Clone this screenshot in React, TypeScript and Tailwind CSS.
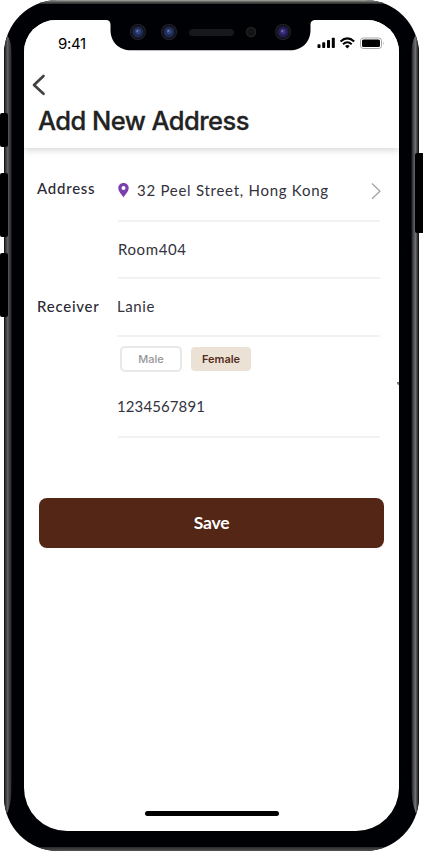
import React from "react";

const AVENIR = "font-['Lato','Liberation_Sans',sans-serif]";
const SF = "font-['Inter','Liberation_Sans',sans-serif]";

function Lens({ x, tint, glow }: { x: number; tint: string; glow: string }) {
  return (
    <g>
      <circle cx={x} cy="32" r="8" fill="#26262a" />
      <circle cx={x} cy="32" r="7.200" fill="#10111c" />
      <circle cx={x} cy="32" r="5.500" fill={tint} />
      <circle cx={x} cy="31.600" r="2.800" fill={glow} />
      <circle cx={x - 0.7} cy="31" r="0.9" fill="#7480a8" />
    </g>
  );
}

function Notch() {
  return (
    <svg className="absolute left-0 top-0 h-[60px] w-[423px]" viewBox="0 0 423 60">
      <path d="M106 19V20C109 20 110.500 21.500 110.500 25V30C110.500 42 119 50.300 131 50.300H290C302 50.300 310.500 42 310.500 30V25C310.500 21.500 312 20 316 20V19Z" fill="#000105" />
      <Lens x={138} tint="#1d2a50" glow="#31447a" />
      <Lens x={169} tint="#1d2a50" glow="#31447a" />
      <rect x="189" y="29" width="45" height="7" rx="3.500" fill="#18181a" />
      <circle cx="251" cy="32" r="5.200" fill="#262628" />
      <circle cx="251" cy="32" r="4.200" fill="#141415" />
      <Lens x={283} tint="#241c50" glow="#3e3182" />
    </svg>
  );
}

function StatusIcons() {
  return (
    <svg className="h-[14px] w-[68px]" viewBox="317 36 68 14">
      <rect x="317.500" y="44.300" width="3" height="3.700" rx=".8" />
      <rect x="322.200" y="42.300" width="3" height="5.700" rx=".8" />
      <rect x="327" y="40" width="3" height="8" rx=".8" />
      <rect x="331.800" y="37.700" width="3" height="10.300" rx=".8" />
      <g fill="none" stroke="#000" strokeWidth="2">
        <path d="M340.500 41.500Q347.300 35.300 354.200 41.500" />
        <path d="M343 44.200Q347.300 40.300 351.700 44.200" />
      </g>
      <path d="M345 46Q347.300 44.200 349.700 46L347.300 48.400Z" />
      <rect x="360.500" y="38" width="21" height="10.500" rx="2.800" fill="none" stroke="#a6a6a6" />
      <rect x="362" y="39.500" width="18" height="7.500" rx="1.600" />
      <path d="M383 41.500Q384.500 43.200 383 45Z" fill="#a6a6a6" />
    </svg>
  );
}

function Header() {
  return (
    <header className={`h-[128px] shrink-0 bg-white shadow-[0_2px_7px_rgba(0,0,0,0.17)] ${SF}`}>
      <div className="flex h-[46px] justify-between pl-[34px] pr-[14px]">
        <span className="mt-[15px] text-[15px] leading-[18px] tracking-[-0.3px] text-black">9:41</span>
        <span className="mt-4"><StatusIcons /></span>
      </div>
      <svg className="ml-[7px] mt-[7px] block h-6 w-4" viewBox="0 0 16 24" fill="none" stroke="#444240" strokeWidth="2.700" strokeLinecap="round" strokeLinejoin="round">
        <path d="M12.500 3L3 12L12.500 20.800" />
      </svg>
      <h1 className="ml-[14px] mt-[8px] whitespace-nowrap text-[25.5px] font-medium leading-8 tracking-[-0.56px] text-[#222] [-webkit-text-stroke:0.3px_#222]">Add New Address</h1>
    </header>
  );
}

function Label({ children }: { children: React.ReactNode }) {
  return <span className="block w-[80px] shrink-0 text-[15px] font-medium leading-5 tracking-[0.75px] text-[#2b2a35]">{children}</span>;
}

export default function App() {
  return (
    <div className={`relative h-[852px] w-[423px] overflow-hidden bg-white ${AVENIR}`}>
      <div className="absolute left-0 top-[113px] z-10 h-[34px] w-2 rounded-[2px] bg-black" />
      <div className="absolute left-0 top-[173px] z-10 h-16 w-2 rounded-[2px] bg-black" />
      <div className="absolute left-0 top-[253px] z-10 h-16 w-2 rounded-[2px] bg-black" />
      <div className="absolute left-[415px] top-[153px] z-10 h-20 w-[9px] rounded-[2px] bg-black" />
      <div className="relative ml-1 h-[851px] w-[415px] overflow-hidden rounded-[54px] bg-[#000105] px-5 pt-5">
        <div className="absolute inset-x-[36px] top-0 h-1 bg-linear-to-b from-[#a6aca6] via-[#535753] to-[#292b2b]" />
        <div className="absolute inset-x-[36px] bottom-0 h-1 bg-linear-to-t from-[#545254] to-[#292829]" />
        <div className="absolute left-0 top-[34px] h-[782px] w-2 rounded-br-[8px_36px] rounded-tr-[8px_20px] bg-[linear-gradient(90deg,#080808_0%,#333234_18%,#666466_48%,#444244_62%,#353436_82%,#000105_100%)]" />
        <div className="absolute right-0 top-[34px] h-[782px] w-2 rounded-bl-[8px_36px] rounded-tl-[8px_20px] bg-[linear-gradient(270deg,#080808_0%,#333234_18%,#737273_45%,#555355_62%,#353436_82%,#000105_100%)]" />
        <main className="relative flex h-[811px] w-[375px] flex-col overflow-hidden rounded-t-[32px] rounded-b-[43px] bg-white">
          <Header />
          <div className="flex h-[72px] shrink-0 pl-[13px] pr-[19px]">
            <div className="pt-[30px]"><Label>Address</Label></div>
            <div className="ml-auto flex h-[74px] w-[262px] items-start border-b-2 border-[#f2f2f2]">
              <svg className="mt-[34.5px] h-[15px] w-[11px]" viewBox="0 0 11 15">
                <path fillRule="evenodd" fill="#7d3fae" d="M5.500 0C2.400 0 .3 2.200.3 5C.3 8.500 3.800 11.500 5.500 14.500C7.200 11.500 10.700 8.500 10.700 5C10.700 2.200 8.600 0 5.500 0ZM5.500 3.100A2 2 0 1 1 5.500 7.100A2 2 0 1 1 5.500 3.100Z" />
              </svg>
              <span className="ml-2 mt-[32px] whitespace-nowrap text-[15px] leading-5 tracking-[0.73px] text-[#33323d]">32 Peel Street, Hong Kong</span>
              <svg className="-mr-px ml-auto mt-[34px] h-[18px] w-[10px]" viewBox="0 0 10 18" fill="none" stroke="#a1a1a1" strokeWidth="1.200">
                <path d="M1 1.500L9 9.200L1 16.800" />
              </svg>
            </div>
          </div>
          <div className="ml-[94px] mr-[19px] mt-[2px] h-[57px] shrink-0 border-b-2 border-[#f2f2f2] pt-[17px] text-[15px] leading-5 tracking-[0.6px] text-[#33323d]">Room404</div>
          <div className="ml-[13px] mr-[19px] flex h-[58px] shrink-0">
            <div className="pt-[17px]"><Label>Receiver</Label></div>
            <div className="ml-auto w-[263px] border-b-2 border-[#f2f2f2] pt-[17px] text-[15px] leading-5 tracking-[0.6px] text-[#33323d]">Lanie</div>
          </div>
          <div className="ml-[94px] mr-[19px] h-[101px] shrink-0 border-b-2 border-[#f2f2f2]">
            <div className={`ml-[2px] flex items-center gap-[9px] pt-[9px] text-[11px] ${SF}`}>
              <button className="h-[26px] w-[62px] rounded-[5px] border-2 border-[#e8e8e8] font-medium text-[#96969a]">Male</button>
              <button className="h-6 w-[60px] rounded-[4px] bg-[#ebe2d5] font-semibold text-[#562b1c]">Female</button>
            </div>
            <div className="-ml-px mt-[24px] text-[15px] leading-5 tracking-[0.1px] text-[#33323d]">1234567891</div>
          </div>
          <button className="ml-[15px] mt-[60px] h-[50px] w-[345px] shrink-0 rounded-lg bg-[#532616] text-[17.5px] font-bold tracking-[-0.2px] text-white">Save</button>
          <div className="mb-[15px] ml-[121px] mt-auto h-[5px] w-[134px] shrink-0 rounded-full bg-black" />
          <div className="absolute left-[373px] top-[362px] h-[3px] w-[2px] rounded-bl-full bg-[#77777b]" />
        </main>
      </div>
      <Notch />
    </div>
  );
}
